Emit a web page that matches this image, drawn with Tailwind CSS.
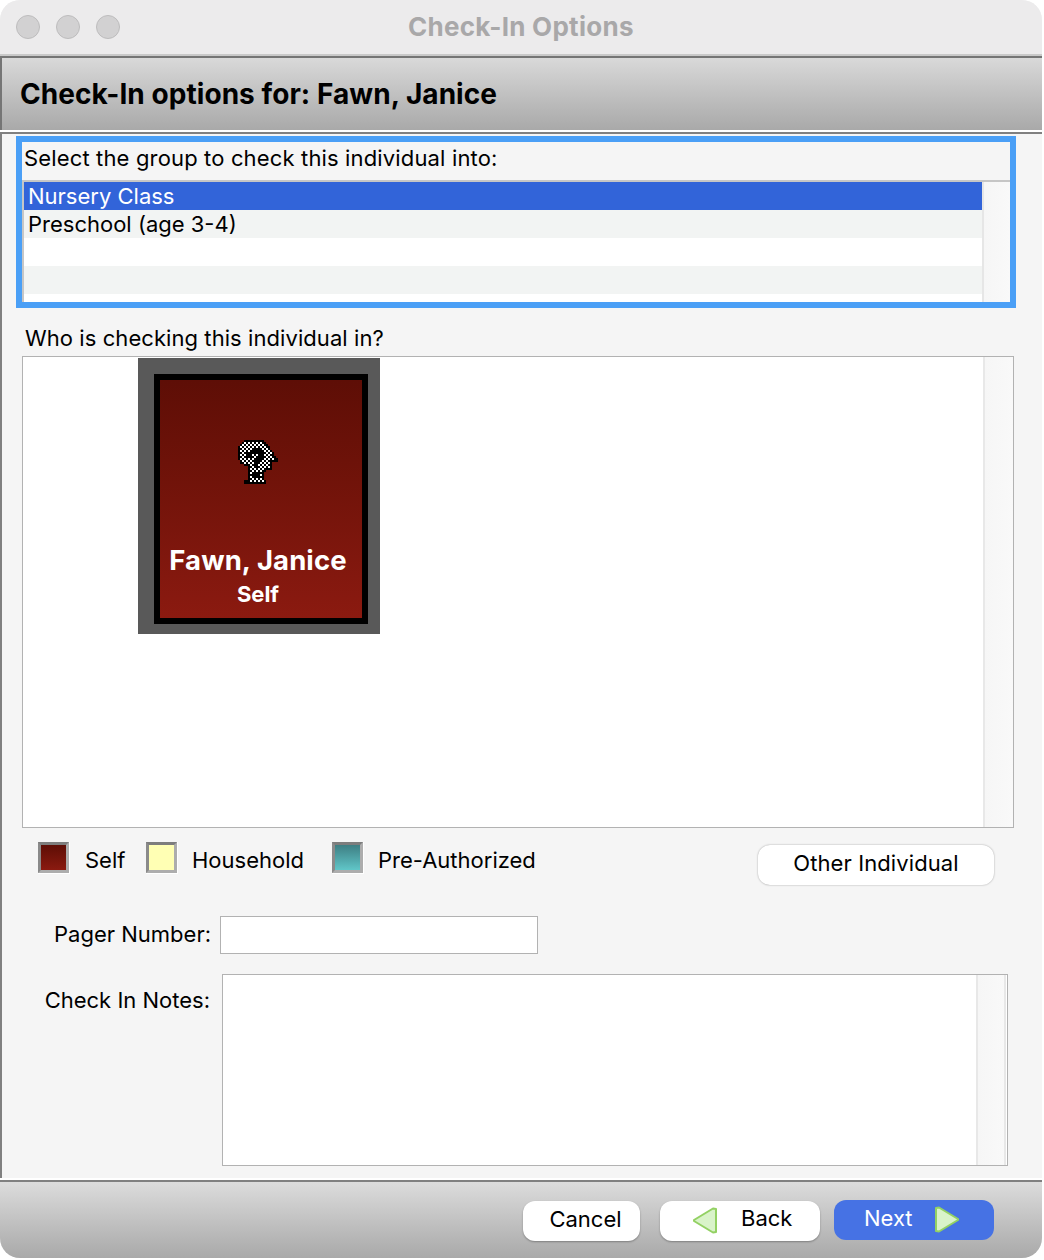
<!DOCTYPE html>
<html>
<head>
<meta charset="utf-8">
<script src="https://cdn.jsdelivr.net/npm/@tailwindcss/browser@4"></script>
</head>
<body class="bg-white">
<div class="w-[1042px] h-[1258px] flex flex-col overflow-hidden rounded-t-[20px] rounded-b-[20px] bg-[#f5f5f5] text-black font-['Inter','Liberation_Sans',sans-serif]">
  <!-- title bar -->
  <div class="relative h-[56px] shrink-0 bg-[#ecebec] border-b-2 border-[#c9c9c9] flex items-center pl-[16px] gap-[16px]">
    <span class="w-[24px] h-[24px] rounded-full bg-[#d2d1d2] border border-[#bdbcbd]"></span>
    <span class="w-[24px] h-[24px] rounded-full bg-[#d2d1d2] border border-[#bdbcbd]"></span>
    <span class="w-[24px] h-[24px] rounded-full bg-[#d2d1d2] border border-[#bdbcbd]"></span>
    <span class="absolute left-[408px] top-[9px] text-[26px] tracking-[0.28px] leading-[36px] font-bold text-[#a9a8a9] whitespace-nowrap">Check-In Options</span>
  </div>
  <!-- header -->
  <div class="h-[74px] shrink-0 border-t-2 border-l-2 border-[#757575] bg-gradient-to-b from-[#d9d9d9] to-[#a9a9a9] flex items-center pl-[18px]">
    <span class="text-[28px] tracking-[0.06px] leading-[36px] font-bold whitespace-nowrap">Check-In options for: Fawn, Janice</span>
  </div>
  <div class="h-[2px] shrink-0 bg-white"></div>
  <!-- content -->
  <div class="h-[1046px] shrink-0 border-t-2 border-l-2 border-[#808080] pl-[14px] pt-[2px] flex flex-col">
    <!-- group list with focus ring -->
    <div class="w-[1000px] h-[172px] shrink-0 border-[6px] border-[#4a9ff6] flex flex-col">
      <div class="h-[38px] shrink-0 pl-[2px] pb-[6px] flex items-center text-[22px] tracking-[0.15px] leading-[30px] whitespace-nowrap">Select the group to check this individual into:</div>
      <div class="flex-1 border-t-2 border-l-2 border-[#c6c6c6] flex min-h-0">
        <div class="flex-1 min-w-0 bg-white text-[22px] leading-[28px]">
          <div class="h-[28px] bg-[#3264d9] text-white pl-[4px] whitespace-nowrap">Nursery Class</div>
          <div class="h-[28px] bg-[#f2f4f3] pl-[4px] whitespace-nowrap">Preschool (age 3-4)</div>
          <div class="h-[28px] bg-white"></div>
          <div class="h-[28px] bg-[#f2f4f3]"></div>
        </div>
        <div class="w-[28px] shrink-0 border-l-2 border-[#e6e6e6] bg-gradient-to-r from-[#f6f6f6] to-[#f9f9f9]"></div>
      </div>
    </div>
    <!-- who -->
    <div class="h-[48px] shrink-0 pl-[9px] pt-[13px] text-[22px] tracking-[0.07px] leading-[34px] whitespace-nowrap">Who is checking this individual in?</div>
    <div class="ml-[6px] w-[992px] h-[472px] shrink-0 border border-[#b2b2b2] bg-white flex">
      <div class="flex-1 min-w-0 pl-[115px] pt-[1px]">
        <div class="w-[242px] h-[276px] bg-[#595959] p-[16px] pb-[10px] pr-[12px]">
          <div class="w-[214px] h-[250px] border-[6px] border-black bg-gradient-to-b from-[#5e0e06] to-[#8b1a10] flex flex-col items-center text-white font-bold">
            <svg class="mt-[60px] ml-[-7px]" width="40" height="44" viewBox="0 0 20 22" shape-rendering="crispEdges">
              <defs>
                <pattern id="chk" width="2" height="2" patternUnits="userSpaceOnUse">
                  <rect width="2" height="2" fill="#000"/>
                  <rect width="1" height="1" fill="#fff"/>
                  <rect x="1" y="1" width="1" height="1" fill="#fff"/>
                </pattern>
              </defs>
              <path fill="#000" d="M3 0H13V1H14V2H15V3H16V5H17V6H18V8H19V9H20V11H17V15H14V16H13V20H14V22H3V20H5V13H3V12H1V10H0V3H1V2H2V1H3Z"/>
              <path fill="url(#chk)" d="M3 1H13V2H14V3H15V5H16V6H17V8H18V9H19V10H16V14H13V15H12V20H13V21H5V20H6V12H3V11H2V10H1V3H2V2H3Z"/>
              <path fill="#000" d="M4 6H6V5H7V4H12V5H13V10H11V11H10V14H8V10H9V9H10V7H7V9H4Z"/>
              <path fill="#000" d="M7 16H11V19H7Z"/>
            </svg>
            <div class="mt-[58px] text-[27.5px] tracking-[0.1px] leading-[36px] whitespace-nowrap ml-[-6px]">Fawn, Janice</div>
            <div class="mt-[2px] text-[22px] leading-[28px] whitespace-nowrap ml-[-6px]">Self</div>
          </div>
        </div>
      </div>
      <div class="w-[30px] shrink-0 border-l-2 border-[#e8e8e8] bg-gradient-to-r from-[#f6f6f6] to-[#f9f9f9]"></div>
    </div>
    <!-- legend -->
    <div class="h-[88px] shrink-0 relative flex items-start text-[22px] leading-[32px]">
      <div class="w-[108px] ml-[22px] mt-[12px] flex items-center">
        <span class="w-[32px] h-[32px] bg-white pb-[1px] pr-[1px]"><span class="block w-[31px] h-[31px] border-[3px] border-[#adadad] border-t-[#7d7d7d] border-l-[#8a8a8a] bg-gradient-to-b from-[#5e0e06] to-[#8b1a10]"></span></span>
        <span class="ml-[15px] mt-[4px]">Self</span>
      </div>
      <div class="w-[186px] mt-[12px] flex items-center">
        <span class="w-[32px] h-[32px] bg-white pb-[1px] pr-[1px]"><span class="block w-[31px] h-[31px] border-[3px] border-[#adadad] border-t-[#7d7d7d] border-l-[#8a8a8a] bg-[#ffffb4]"></span></span>
        <span class="ml-[14px] mt-[4px]">Household</span>
      </div>
      <div class="mt-[12px] flex items-center">
        <span class="w-[32px] h-[32px] bg-white pb-[1px] pr-[1px]"><span class="block w-[31px] h-[31px] border-[3px] border-[#adadad] border-t-[#7d7d7d] border-l-[#8a8a8a] bg-gradient-to-b from-[#3e7f84] to-[#60c6c8]"></span></span>
        <span class="ml-[14px] mt-[4px]">Pre-Authorized</span>
      </div>
      <button class="absolute left-[742px] top-[17px] w-[236px] h-[40px] rounded-[12px] bg-white shadow-[0_0_2px_rgba(0,0,0,0.35)] text-[22px] tracking-[0.1px] leading-[36px] text-center pb-[6px]">Other Individual</button>
    </div>
    <!-- pager -->
    <div class="h-[38px] shrink-0 flex items-center">
      <label class="w-[195px] pb-[2px] text-right text-[22px] leading-[32px] whitespace-nowrap">Pager Number:</label>
      <div class="ml-[9px] w-[318px] h-[38px] bg-white border border-[#b2b2b2]"></div>
    </div>
    <!-- notes -->
    <div class="mt-[20px] h-[192px] shrink-0 flex items-start">
      <label class="w-[194px] mt-[10px] text-right text-[22px] leading-[32px] whitespace-nowrap">Check In Notes:</label>
      <div class="ml-[12px] w-[786px] h-[192px] bg-white border border-[#b2b2b2] flex">
        <div class="flex-1"></div>
        <div class="w-[30px] mr-[1px] shrink-0 border-x-2 border-[#e8e8e8] bg-gradient-to-r from-[#f6f6f6] to-[#f9f9f9]"></div>
      </div>
    </div>
  </div>
  <div class="h-[2px] shrink-0 bg-white"></div>
  <!-- footer -->
  <div class="flex-1 min-h-0 border-t-2 border-[#808080] bg-gradient-to-b from-[#dcdcdc] to-[#a9a9a9] flex items-start pl-[523px]">
    <button class="mt-[19px] w-[117px] h-[40px] rounded-[12px] bg-white shadow-[0_1px_2px_rgba(0,0,0,0.3)] text-[22px] leading-[36px] pb-[6px] pl-[8px] text-center">Cancel</button>
    <button class="mt-[19px] ml-[20px] w-[160px] h-[40px] rounded-[12px] bg-white shadow-[0_1px_2px_rgba(0,0,0,0.3)] text-[22px] leading-[36px] pb-[4px] flex items-center pl-[32px]">
      <svg width="26" height="27" viewBox="0 0 26 27" class="mt-[2px] shrink-0"><path d="M24 2 V25 L21 25.5 L2 14 V13 L21 1.5 Z" fill="#d9f3c9" stroke="#93d163" stroke-width="2" stroke-linejoin="round"/></svg>
      <span class="ml-[23px] mb-[2px]">Back</span>
    </button>
    <button class="mt-[18px] ml-[14px] w-[160px] h-[40px] rounded-[12px] bg-[#4672e4] text-white text-[22px] leading-[36px] pb-[4px] flex items-center pl-[30px]">
      <span class="w-[70px] text-left">Next</span>
      <svg width="26" height="27" viewBox="0 0 26 27" class="mt-[2px] shrink-0"><path d="M2 2 V25 L5 25.5 L24 14 V13 L5 1.5 Z" fill="#d9f3c9" stroke="#93d163" stroke-width="2" stroke-linejoin="round"/></svg>
    </button>
  </div>
</div>
</body>
</html>
